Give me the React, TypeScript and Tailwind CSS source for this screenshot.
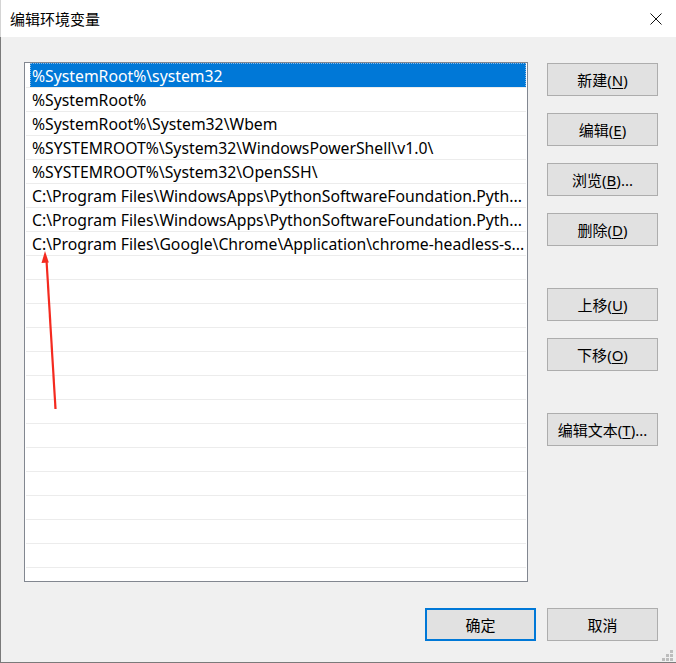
import React from "react";

const rows: string[] = [
  "%SystemRoot%\\system32",
  "%SystemRoot%",
  "%SystemRoot%\\System32\\Wbem",
  "%SYSTEMROOT%\\System32\\WindowsPowerShell\\v1.0\\",
  "%SYSTEMROOT%\\System32\\OpenSSH\\",
  "C:\\Program Files\\WindowsApps\\PythonSoftwareFoundation.Pyth...",
  "C:\\Program Files\\WindowsApps\\PythonSoftwareFoundation.Pyth...",
  "C:\\Program Files\\Google\\Chrome\\Application\\chrome-headless-s...",
];

function Btn({
  label,
  acc,
  tail,
  className,
}: {
  label: string;
  acc?: string;
  tail?: string;
  className?: string;
}) {
  return (
    <div
      className={
        "h-[33px] w-[111px] flex items-center justify-center bg-[#e1e1e1] border border-[#adadad] text-[15px] leading-[20px] text-black " +
        (className ?? "")
      }
    >
      <span>
        {label}
        {acc ? (
          <>
            (<span className="underline underline-offset-2 decoration-1">{acc}</span>)
          </>
        ) : null}
        {tail}
      </span>
    </div>
  );
}

export default function App() {
  const allRows = [...rows];
  while (allRows.length < 22) allRows.push("");
  return (
    <div className="w-[676px] h-[663px] relative flex flex-col bg-[#f0f0f0] font-['Noto_Sans','Noto_Sans_CJK_SC',sans-serif] text-black overflow-hidden">
      {/* title bar */}
      <div className="h-[37px] shrink-0 bg-white flex items-center justify-between border-l border-[#d4d4d4]">
        <span className="pl-[9px] text-[15px] leading-[20px] font-['Noto_Sans_CJK_SC',sans-serif]">
          编辑环境变量
        </span>
        <svg width="12" height="12" viewBox="0 0 12 12" className="mr-[14px]">
          <path d="M0.5 0.5 L11.5 11.5 M11.5 0.5 L0.5 11.5" stroke="#111" strokeWidth="1" />
        </svg>
      </div>

      {/* body */}
      <div className="flex-1 flex flex-col border-l border-b border-[#7a7a7a] pl-[23px] pt-[25px] pr-[18px]">
        <div className="flex gap-[19px]">
          {/* list box */}
          <div className="w-[504px] h-[520px] border border-[#828790] bg-white overflow-hidden">
            {allRows.map((r, i) =>
              i === 0 ? (
                <div key={i} className="h-[24px] pl-[5px] pr-[1px]">
                  <div className="h-[25px] bg-[#0078d7] border border-dotted border-[#8fb8e0] flex items-center pl-[1px] text-white text-[15.75px] leading-[20px] whitespace-nowrap overflow-hidden">
                    {r}
                  </div>
                </div>
              ) : (
                <div
                  key={i}
                  className="h-[24px] mx-[1px] border-t border-[#ececec] flex items-center pl-[6px] text-[15.75px] leading-[20px] whitespace-nowrap overflow-hidden"
                >
                  {r}
                </div>
              )
            )}
          </div>

          {/* button column */}
          <div className="flex flex-col pt-[1px]">
            <Btn label="新建" acc="N" />
            <Btn label="编辑" acc="E" className="mt-[17px]" />
            <Btn label="浏览" acc="B" tail="..." className="mt-[17px]" />
            <Btn label="删除" acc="D" className="mt-[17px]" />
            <Btn label="上移" acc="U" className="mt-[42px]" />
            <Btn label="下移" acc="O" className="mt-[17px]" />
            <Btn label="编辑文本" acc="T" tail="..." className="mt-[42px]" />
          </div>
        </div>

        {/* bottom buttons */}
        <div className="flex justify-end gap-[11px] mt-[26px]">
          <div className="h-[33px] w-[111px] flex items-center justify-center bg-[#e1e1e1] border-2 border-[#0078d7] text-[15px] leading-[20px]">
            确定
          </div>
          <Btn label="取消" />
        </div>
      </div>

      {/* resize grip */}
      <svg width="12" height="12" viewBox="0 0 12 12" className="absolute left-[662px] top-[650px]">
        <rect x="8" y="0" width="3" height="3" fill="#bdbdbd" />
        <rect x="4" y="4" width="3" height="3" fill="#bdbdbd" />
        <rect x="8" y="4" width="3" height="3" fill="#bdbdbd" />
        <rect x="0" y="8" width="3" height="3" fill="#bdbdbd" />
        <rect x="4" y="8" width="3" height="3" fill="#bdbdbd" />
        <rect x="8" y="8" width="3" height="3" fill="#bdbdbd" />
      </svg>

      {/* red annotation arrow */}
      <svg
        width="676"
        height="663"
        viewBox="0 0 676 663"
        className="absolute left-0 top-0 pointer-events-none"
      >
        <line x1="55.5" y1="409" x2="46.5" y2="260" stroke="#f42a1f" strokeWidth="2.2" />
        <polygon points="45,251 41.5,263 48.8,262.6" fill="#f42a1f" />
      </svg>
    </div>
  );
}
